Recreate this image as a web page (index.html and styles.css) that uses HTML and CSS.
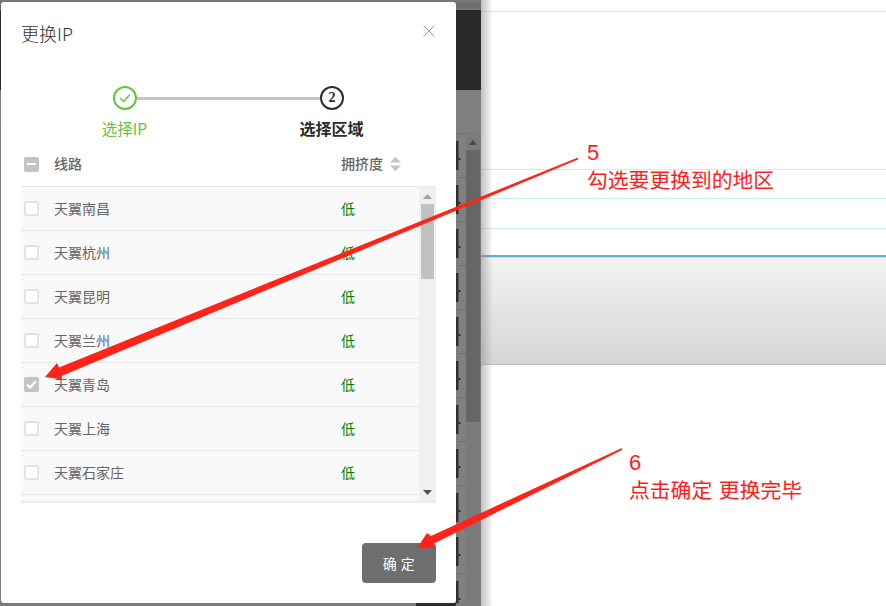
FILE: index.html
```html
<!DOCTYPE html>
<html lang="zh">
<head>
<meta charset="utf-8">
<title>更换IP</title>
<link rel="stylesheet" href="styles.css">
</head>
<body>
<div class="page">
  <div class="backdrop">
    <div class="bar-top"></div>
    <div class="bar-dark"></div>
    <div class="bar-mid"></div>
    <div class="back-list">
      <div class="back-rows"></div>
      <div class="back-scroll">
        <svg class="back-arrow" width="14" height="8" viewBox="0 0 14 8"><path d="M7 1 L11 6 L3 6 Z"/></svg>
        <div class="back-thumb"></div>
      </div>
    </div>
    <div class="bar-bottom"></div>
  </div>

  <div class="right">
    <div class="line line-a"></div>
    <div class="line line-b"></div>
    <div class="line line-c"></div>
    <div class="line line-d"></div>
    <div class="line line-e"></div>
    <div class="band"></div>
    <div class="edge-shadow"></div>
  </div>

  <section class="modal">
    <header class="modal-head">
      <h1 class="modal-title">更换IP</h1>
      <svg class="close" width="12" height="12" viewBox="0 0 12 12"><path d="M0.5 0.5 L11.5 11.5 M11.5 0.5 L0.5 11.5"/></svg>
    </header>

    <div class="track">
      <span class="node node-done">
        <svg width="14" height="12" viewBox="0 0 14 12"><path d="M2 6 L5.6 9.4 L12 2.6"/></svg>
      </span>
      <span class="connector"></span>
      <span class="node node-now">2</span>
    </div>
    <div class="step-labels">
      <span class="step-done">选择IP</span>
      <span class="step-now">选择区域</span>
    </div>

    <div class="table">
      <div class="thead">
        <span class="check check-mixed"><i></i></span>
        <span class="col-name">线路</span>
        <span class="col-level">拥挤度</span>
        <svg class="sort" width="11" height="14" viewBox="0 0 11 14"><path d="M5.5 0 L11 5.5 L0 5.5 Z M0 8.5 L11 8.5 L5.5 14 Z"/></svg>
      </div>
      <div class="tbody">
        <div class="rows">
          <div class="row"><span class="check"></span><span class="col-name">天翼南昌</span><span class="col-level low">低</span></div>
          <div class="row"><span class="check"></span><span class="col-name">天翼杭州</span><span class="col-level low">低</span></div>
          <div class="row"><span class="check"></span><span class="col-name">天翼昆明</span><span class="col-level low">低</span></div>
          <div class="row"><span class="check"></span><span class="col-name">天翼兰州</span><span class="col-level low">低</span></div>
          <div class="row"><span class="check check-on"><svg width="11" height="9" viewBox="0 0 11 9"><path d="M1 4.6 L4 7.4 L10 1.2"/></svg></span><span class="col-name">天翼青岛</span><span class="col-level low">低</span></div>
          <div class="row"><span class="check"></span><span class="col-name">天翼上海</span><span class="col-level low">低</span></div>
          <div class="row"><span class="check"></span><span class="col-name">天翼石家庄</span><span class="col-level low">低</span></div>
        </div>
        <div class="scrollbar">
          <svg class="sb-up" width="9" height="5" viewBox="0 0 9 5"><path d="M4.5 0 L9 5 L0 5 Z"/></svg>
          <div class="sb-thumb"></div>
          <svg class="sb-down" width="9" height="5" viewBox="0 0 9 5"><path d="M0 0 L9 0 L4.5 5 Z"/></svg>
        </div>
      </div>
    </div>

    <div class="modal-foot">
      <button class="ok" type="button">确 定</button>
    </div>
  </section>

  <svg class="arrows" width="886" height="606" viewBox="0 0 886 606">
    <path d="M578 157.5 L59 367.5 L57 363 L45 377 L62 379.5 L61.5 376 L578 159.5 Z"/>
    <path d="M622 448 L431 536 L427 533 L417 548 L435 548 L433 544 L622 450 Z"/>
  </svg>

  <div class="note note-5">
    <div class="note-num">5</div>
    <div class="note-text">勾选要更换到的地区</div>
  </div>
  <div class="note note-6">
    <div class="note-num">6</div>
    <div class="note-text">点击确定 更换完毕</div>
  </div>
</div>
</body>
</html>
```

FILE: styles.css
```css
* { box-sizing: border-box; }

html, body {
  margin: 0;
  padding: 0;
  height: 100%;
  overflow: hidden;
  background: #fff;
}

body {
  font-family: "Noto Sans CJK SC", "Liberation Sans", sans-serif;
}

.page {
  position: relative;
  display: flex;
  width: 886px;
  height: 606px;
  overflow: hidden;
}

/* dimmed page behind the dialog */
.backdrop {
  display: flex;
  flex-direction: column;
  width: 481px;
  flex: none;
  background: #7b7b7b;
}
.bar-top { height: 10px; background: linear-gradient(#7a7a7a, #6c6c6c 60%, #777); }
.bar-dark { height: 80px; background: #292929; }
.bar-mid { height: 43px; background: #808080; }
.back-list {
  flex: 1;
  display: flex;
  padding-left: 456px;
  background: #7b7b7b;
}
.back-rows {
  width: 10px;
  background:
    radial-gradient(circle at 3.5px 50%, #222 0, #222 1px, transparent 1.2px) 0 4px / 10px 44px,
    repeating-linear-gradient(#7b7b7b 0 8px, #2f2f2f 8px 37px, #7b7b7b 37px 44px) 0 0 / 2.5px 100% no-repeat,
    repeating-linear-gradient(#6f6f6f 0 1px, #808080 1px 44px);
}
.back-scroll {
  width: 14px;
  display: flex;
  flex-direction: column;
  background: #7b7b7b;
}
.back-arrow { display: block; fill: #4a4a4a; margin-top: 6px; margin-bottom: 3px; }
.back-thumb { height: 272px; background: #666; }
.bar-bottom {
  height: 3px;
  flex: none;
  background: linear-gradient(90deg, #7b7b7b 416px, #2b2b2b 416px, #2b2b2b 456px, #7b7b7b 456px);
}

/* page to the right of the dim layer */
.right {
  position: relative;
  flex: 1;
  display: flex;
  flex-direction: column;
}
.line { flex: none; border-bottom: 1px solid #c8edf8; }
.line-a { height: 12px; }
.line-b { height: 158px; }
.line-c { height: 29px; }
.line-d { height: 30px; }
.line-e { height: 28px; border-bottom: 2px solid #62aed0; }
.band {
  height: 108px;
  background: linear-gradient(#f3f3f3, #d4d5d4);
  border-top: 1px solid #ddd;
  border-bottom: 1px solid #bdbdbd;
}
.edge-shadow {
  position: absolute;
  left: 0;
  top: 0;
  width: 12px;
  height: 100%;
  background: linear-gradient(90deg, rgba(150,150,150,.6), rgba(255,255,255,0));
}

/* dialog */
.modal {
  position: absolute;
  left: 1px;
  top: 2px;
  width: 455px;
  height: 601px;
  display: flex;
  flex-direction: column;
  background: #fff;
  border-radius: 3px;
}
.modal-head {
  height: 84px;
  flex: none;
  display: flex;
  justify-content: space-between;
  align-items: flex-start;
  padding: 19px 21px 0 20px;
}
.modal-title {
  margin: 0;
  font-size: 18px;
  line-height: 24px;
  font-weight: 300;
  color: #333;
}
.close { margin-top: 4px; fill: none; stroke: #a0a0a0; stroke-width: 1; }

.track {
  display: flex;
  align-items: center;
  height: 24px;
  flex: none;
  padding-left: 112px;
}
.node {
  flex: none;
  width: 24px;
  height: 24px;
  border-radius: 50%;
  display: flex;
  align-items: center;
  justify-content: center;
}
.node-done { border: 2px solid #67c23a; }
.node-done svg { fill: none; stroke: #67c23a; stroke-width: 1.4; }
.node-now {
  border: 2px solid #2b2b2b;
  font-family: "Liberation Serif", serif;
  font-size: 14px;
  font-weight: 700;
  color: #2b2b2b;
}
.connector { width: 183px; height: 3px; background: #c0c4cc; }

.step-labels {
  flex: none;
  display: grid;
  grid-template-columns: 207px 207px;
  margin-left: 20px;
  height: 40px;
  padding-top: 6px;
  text-align: center;
}
.step-done { font-size: 15.5px; line-height: 24px; color: #67c23a; }
.step-now { font-size: 16px; line-height: 24px; font-weight: 700; color: #2b2b2b; }

.table {
  flex: none;
  margin-left: 20px;
  width: 415px;
  font-size: 14px;
  color: #666;
}
.thead {
  display: flex;
  align-items: center;
  height: 37px;
  padding: 0 0 8px 3px;
  border-bottom: 1px solid #e8e8e8;
  font-weight: 500;
}
.col-name { width: 287px; margin-left: 15px; flex: none; }
.col-level { flex: none; }
.thead .col-name, .thead .col-level, .row .col-name, .row .col-level { line-height: 20px; padding-bottom: 2px; }
.sort { margin-left: 7px; fill: #c0c4cc; }
.low { color: #008000; font-size: 14px; }

.check {
  flex: none;
  width: 15px;
  height: 15px;
  border: 2px solid #dfe3ea;
  border-radius: 2px;
  background: #fff;
  display: flex;
  align-items: center;
  justify-content: center;
}
.check-mixed { background: #c4c4c4; border-color: #c4c4c4; }
.check-mixed i { display: block; width: 9px; height: 2px; background: #fff; }
.check-on { background: #c4c4c4; border-color: #c4c4c4; }
.check-on svg { fill: none; stroke: #fff; stroke-width: 2.2; flex: none; }

.tbody {
  display: flex;
  height: 316px;
  background: #f9f9f9;
  border-bottom: 2px solid #ececec;
}
.rows { flex: 1; overflow: hidden; }
.row {
  display: flex;
  align-items: center;
  height: 44px;
  padding-left: 3px;
  border-bottom: 1px solid #e9e9e9;
}
.scrollbar {
  flex: none;
  width: 17px;
  display: flex;
  flex-direction: column;
  align-items: center;
  background: #f0f0f0;
}
.sb-up { margin-top: 7px; fill: #a3a3a3; flex: none; }
.sb-thumb { width: 13px; height: 75px; margin-top: 5px; background: #c1c1c1; }
.sb-down { margin-top: auto; margin-bottom: 6px; fill: #505050; flex: none; }

.modal-foot {
  flex: 1;
  display: flex;
  justify-content: flex-end;
  padding: 40px 20px 0 0;
}
.ok {
  width: 74px;
  height: 40px;
  border: 0;
  border-radius: 4px;
  padding: 0;
  background: #6e6e6e;
  color: #fff;
  font: inherit;
  font-size: 14px;
  letter-spacing: 0.5px;
}

/* annotation layer */
.arrows {
  position: absolute;
  left: 0;
  top: 0;
  fill: #ff2318;
  pointer-events: none;
}
.note {
  position: absolute;
  color: #ff1c1c;
  font-size: 20.8px;
  line-height: 27px;
}
.note-5 { left: 587px; top: 139px; }
.note-6 { left: 629px; top: 449px; }
.note-num { font-family: "Liberation Sans", sans-serif; font-size: 22px; }
.note-text { white-space: pre; word-spacing: 2px; }
```
